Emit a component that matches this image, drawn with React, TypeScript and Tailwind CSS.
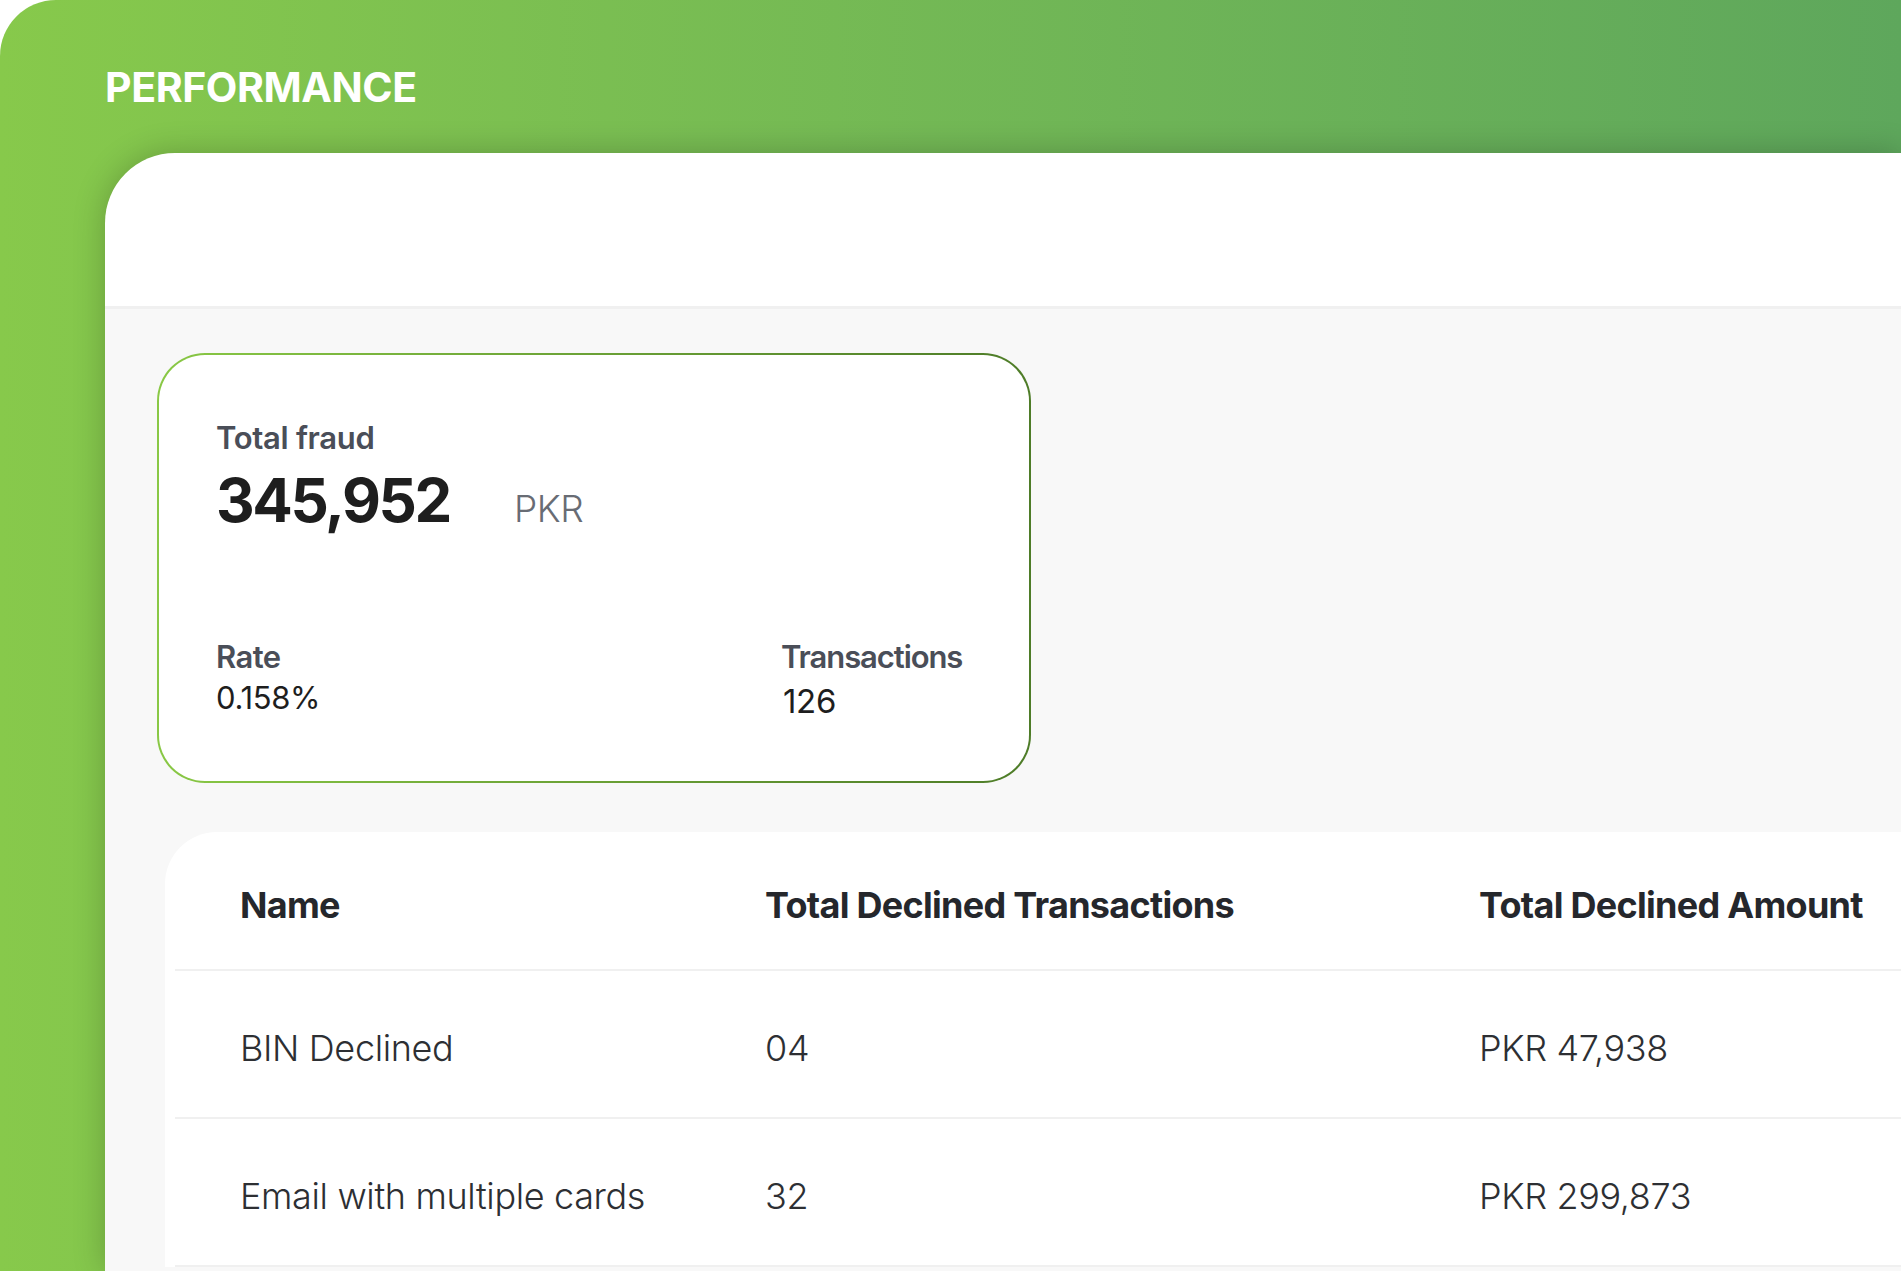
const ROWS = [
  { name: 'BIN Declined', count: '04', amount: 'PKR 47,938' },
  { name: 'Email with multiple cards', count: '32', amount: 'PKR 299,873' },
];

function FraudCard() {
  return (
    <div className="h-[430px] w-[874px] rounded-[48px] bg-linear-to-r from-[#89c845] to-[#4e7c28] p-[2px]">
      <div className="flex h-full flex-col justify-between rounded-[46px] bg-white pb-[62px] pl-[57px] pt-[65px]">
        <div>
          <p className="text-[31px] font-semibold leading-[36px] tracking-[-0.01em] text-[#4a4e58]">Total fraud</p>
          <div className="mt-[14px] flex items-baseline">
            <span className="text-[60px] font-bold leading-[60px] tracking-[-0.04em] text-[#1e1e1e]">345,952</span>
            <span className="ml-[64px] text-[37px] font-light leading-[40px] tracking-[-0.01em] text-[#686c74]">PKR</span>
          </div>
        </div>
        <div className="flex">
          <div className="w-[565px]">
            <p className="text-[31px] font-semibold leading-[36px] tracking-[-0.02em] text-[#4a4e58]">Rate</p>
            <p className="mt-[5px] text-[31px] leading-[36px] tracking-[-0.01em] text-[#1e1e1e]">0.158%</p>
          </div>
          <div>
            <p className="text-[31px] font-semibold leading-[36px] tracking-[-0.035em] text-[#4a4e58]">Transactions</p>
            <p className="mt-[8px] pl-[2px] text-[33px] leading-[36px] tracking-[-0.01em] text-[#1e1e1e]">126</p>
          </div>
        </div>
      </div>
    </div>
  );
}

function DeclinedTable() {
  return (
    <div className="ml-[8px] mt-[49px] rounded-tl-[52px] bg-white pl-[10px]">
      <div className="grid h-[139px] grid-cols-[525px_714px_1fr] items-center border-b-2 border-[#f0f0f0] pl-[65px] pt-[9px] text-[36px] font-bold tracking-[-0.02em] text-[#25272c]">
        <span>Name</span>
        <span>Total Declined Transactions</span>
        <span>Total Declined Amount</span>
      </div>
      {ROWS.map((row) => (
        <div
          key={row.name}
          className="grid h-[148px] grid-cols-[525px_714px_1fr] items-center border-b-2 border-[#f0f0f0] pl-[65px] pt-[8px] text-[36px] font-light tracking-[-0.01em] text-[#2d2f33]"
        >
          <span>{row.name}</span>
          <span>{row.count}</span>
          <span>{row.amount}</span>
        </div>
      ))}
    </div>
  );
}

export default function App() {
  return (
    <div className="h-[1271px] w-[1901px] overflow-hidden bg-white font-['Inter','Liberation_Sans',sans-serif] antialiased">
      <div className="flex h-full flex-col rounded-tl-[56px] bg-linear-to-r from-[#87c94b] to-[#5ea75c] pl-[105px]">
        <header className="h-[153px] shrink-0 pt-[63px]">
          <h1 className="text-[41px] font-bold leading-[48px] tracking-[-0.01em] text-white">PERFORMANCE</h1>
        </header>
        <main className="flex flex-1 flex-col rounded-tl-[70px] bg-white shadow-[0_0_32px_rgba(0,0,0,0.22)]">
          <div className="h-[156px] shrink-0 border-b-[3px] border-[#f0f0f0]" />
          <div className="flex-1 bg-[#f8f8f8] pl-[52px] pt-[44px]">
            <FraudCard />
            <DeclinedTable />
          </div>
        </main>
      </div>
    </div>
  );
}
